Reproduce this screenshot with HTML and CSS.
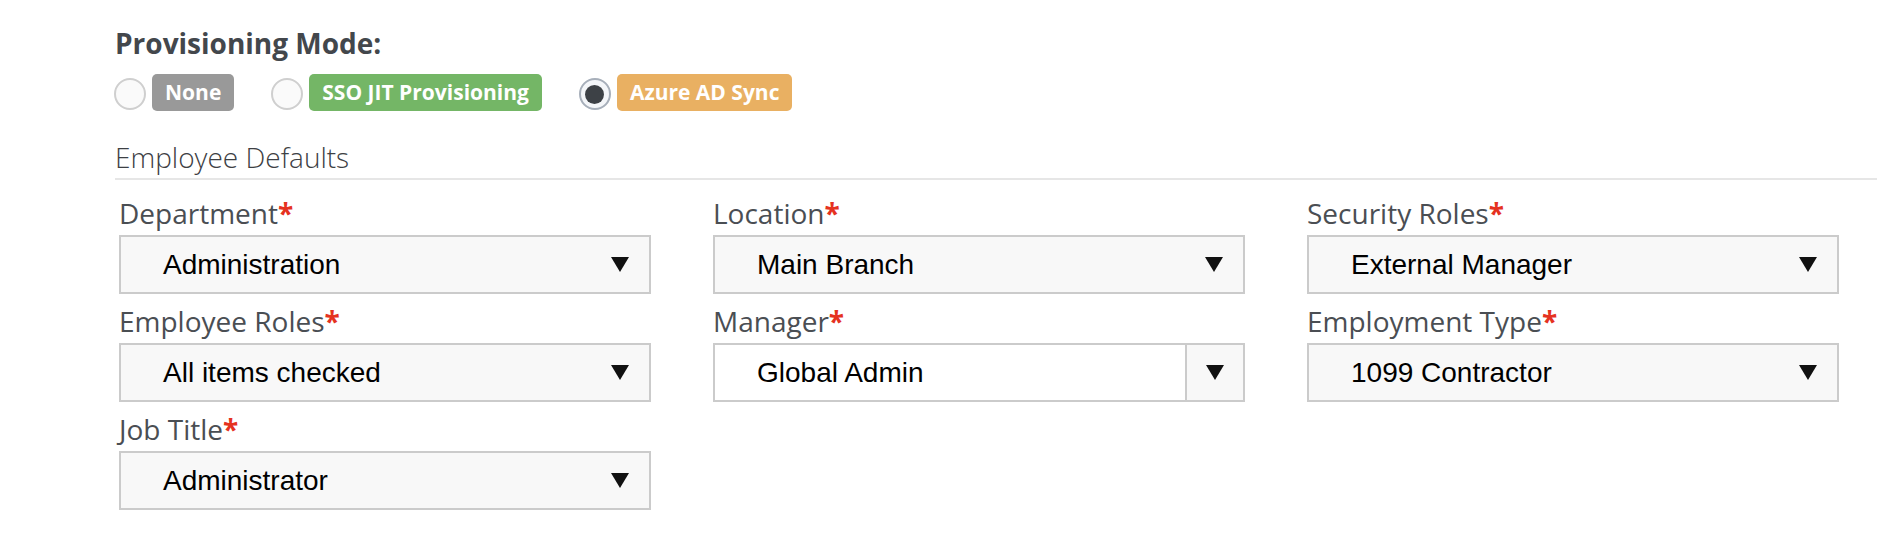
FILE: index.html
```html
<!DOCTYPE html>
<html>
<head>
<meta charset="utf-8">
<link rel="stylesheet" href="styles.css">
</head>
<body>
<div class="page">
  <h2 class="title">Provisioning Mode:</h2>
  <div class="modes">
    <div class="mode"><span class="radio"></span><span class="badge badge-none">None</span></div>
    <div class="mode"><span class="radio"></span><span class="badge badge-sso">SSO JIT Provisioning</span></div>
    <div class="mode"><span class="radio radio-on"><span class="dot"></span></span><span class="badge badge-azure">Azure AD Sync</span></div>
  </div>
  <div class="section-title">Employee Defaults</div>
  <div class="form-grid">
    <div class="field">
      <div class="label">Department<span class="req">*</span></div>
      <div class="select"><span class="value">Administration</span><span class="arrow"><svg width="18" height="15" viewBox="0 0 18 15"><polygon points="0,0 18,0 9,15" fill="#111"/></svg></span></div>
    </div>
    <div class="field">
      <div class="label">Location<span class="req">*</span></div>
      <div class="select"><span class="value">Main Branch</span><span class="arrow"><svg width="18" height="15" viewBox="0 0 18 15"><polygon points="0,0 18,0 9,15" fill="#111"/></svg></span></div>
    </div>
    <div class="field">
      <div class="label">Security Roles<span class="req">*</span></div>
      <div class="select"><span class="value">External Manager</span><span class="arrow"><svg width="18" height="15" viewBox="0 0 18 15"><polygon points="0,0 18,0 9,15" fill="#111"/></svg></span></div>
    </div>
    <div class="field">
      <div class="label">Employee Roles<span class="req">*</span></div>
      <div class="select"><span class="value">All items checked</span><span class="arrow"><svg width="18" height="15" viewBox="0 0 18 15"><polygon points="0,0 18,0 9,15" fill="#111"/></svg></span></div>
    </div>
    <div class="field">
      <div class="label">Manager<span class="req">*</span></div>
      <div class="select split"><span class="value">Global Admin</span><span class="arrow"><svg width="18" height="15" viewBox="0 0 18 15"><polygon points="0,0 18,0 9,15" fill="#111"/></svg></span></div>
    </div>
    <div class="field">
      <div class="label">Employment Type<span class="req">*</span></div>
      <div class="select"><span class="value">1099 Contractor</span><span class="arrow"><svg width="18" height="15" viewBox="0 0 18 15"><polygon points="0,0 18,0 9,15" fill="#111"/></svg></span></div>
    </div>
    <div class="field">
      <div class="label">Job Title<span class="req">*</span></div>
      <div class="select"><span class="value">Administrator</span><span class="arrow"><svg width="18" height="15" viewBox="0 0 18 15"><polygon points="0,0 18,0 9,15" fill="#111"/></svg></span></div>
    </div>
  </div>
</div>
</body>
</html>
```

FILE: styles.css
```css
html, body {
  margin: 0;
  padding: 0;
  background: #ffffff;
}

.page {
  width: 1762px;
  padding: 24px 21px 0 115px;
  font-family: "Open Sans", "Liberation Sans", sans-serif;
}

.title {
  margin: 0;
  font-size: 28px;
  line-height: 38px;
  font-weight: 700;
  color: #43474c;
}

.modes {
  display: flex;
  align-items: center;
  height: 37px;
  margin-top: 12px;
  margin-left: -1px;
}

.mode {
  display: flex;
  align-items: center;
  gap: 6px;
  margin-right: 37px;
}

.radio {
  box-sizing: border-box;
  width: 32px;
  height: 32px;
  margin-top: 3px;
  border: 2px solid #cfcfcf;
  border-radius: 50%;
  background: #fafafa;
  display: flex;
  align-items: center;
  justify-content: center;
}

.radio-on {
  border-color: #a7afba;
  background: #f4f6f9;
}

.dot {
  width: 19px;
  height: 19px;
  border-radius: 50%;
  background: #3d4146;
}

.badge {
  height: 37px;
  padding: 0 13px;
  font-size: 21px;
  line-height: 37px;
  font-weight: 700;
  color: #ffffff;
  border-radius: 5px;
  white-space: nowrap;
}

.badge-none { background: #999999; }
.badge-sso { background: #74b666; }
.badge-azure { background: #e9b062; }

.section-title {
  margin-top: 28px;
  font-size: 28px;
  line-height: 37px;
  font-weight: 300;
  color: #3d4044;
  padding-bottom: 2px;
  border-bottom: 2px solid #e6e6e6;
}

.form-grid {
  display: grid;
  grid-template-columns: repeat(3, 532px);
  column-gap: 62px;
  row-gap: 8px;
  margin-top: 14px;
  margin-left: 4px;
}

.label {
  font-size: 28px;
  line-height: 38px;
  font-weight: 400;
  color: #4a4e53;
  margin-bottom: 3px;
  white-space: nowrap;
}

.req {
  color: #e5321f;
  font-weight: 700;
}

.select {
  box-sizing: border-box;
  height: 59px;
  border: 2px solid #cbcbcb;
  background: #f8f8f8;
  display: flex;
  align-items: stretch;
}

.value {
  flex: 1;
  display: flex;
  align-items: center;
  padding-left: 42px;
  font-family: "Liberation Sans", Arial, sans-serif;
  font-size: 28px;
  color: #000000;
}

.arrow {
  width: 58px;
  display: flex;
  align-items: center;
  justify-content: center;
}

.split .value {
  background: #ffffff;
}

.split .arrow {
  box-sizing: border-box;
  width: 58px;
  border-left: 2px solid #cbcbcb;
  background: #f8f8f8;
}
```
